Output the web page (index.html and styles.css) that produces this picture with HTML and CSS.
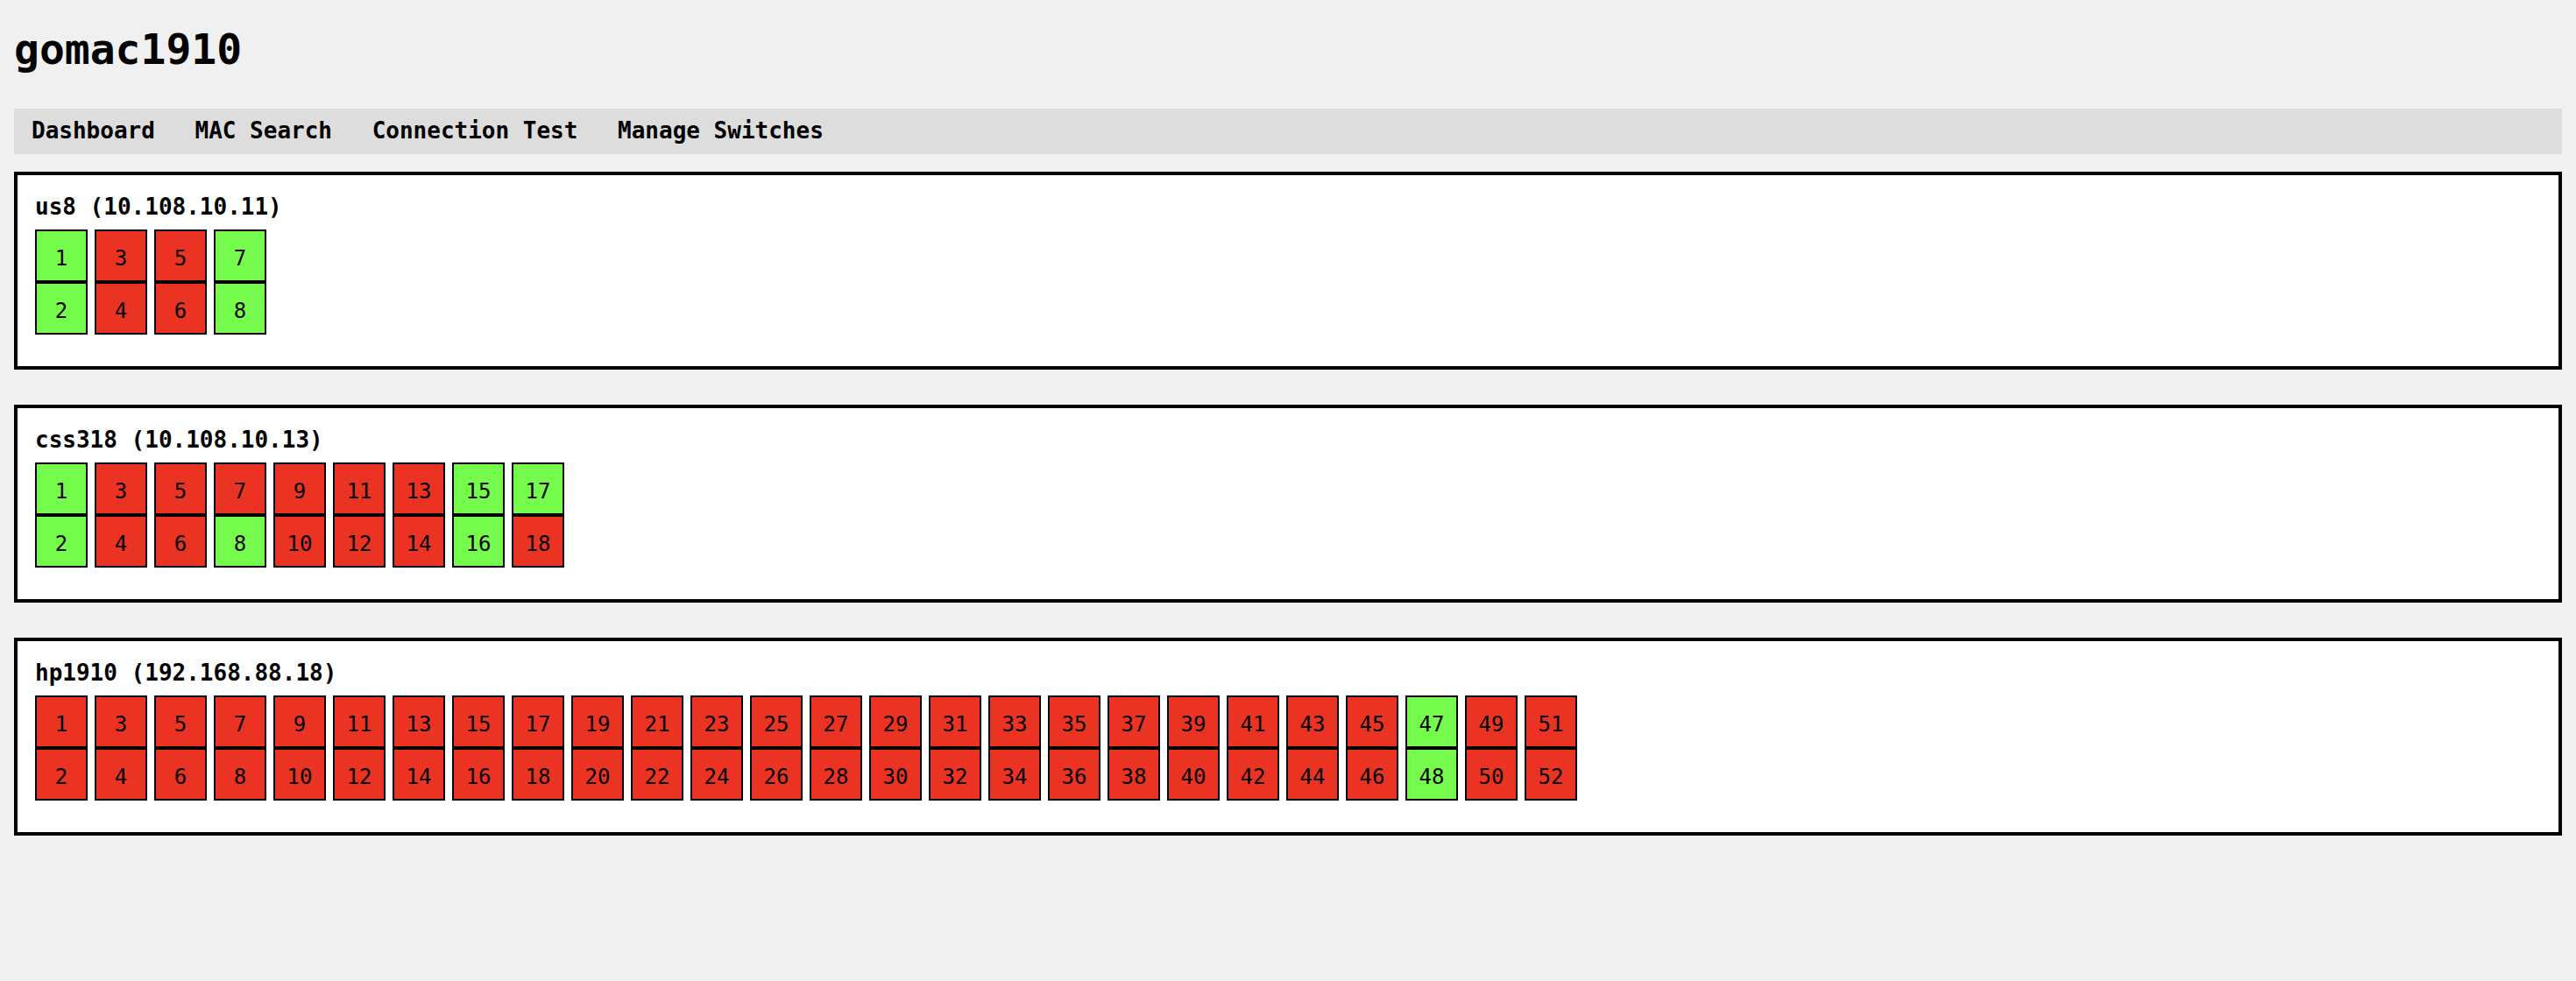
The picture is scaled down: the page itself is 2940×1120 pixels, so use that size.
FILE: index.html
```html
<!DOCTYPE html>
<html>
<head>
<meta charset="utf-8">
<title>gomac1910</title>
<link rel="stylesheet" href="styles.css">
</head>
<body>
<h1 class="title">gomac1910</h1>
<nav class="nav">
  <a href="#" class="nav-link">Dashboard</a>
  <a href="#" class="nav-link">MAC Search</a>
  <a href="#" class="nav-link">Connection Test</a>
  <a href="#" class="nav-link">Manage Switches</a>
</nav>

<section class="switch">
  <div class="switch-name">us8 (10.108.10.11)</div>
  <div class="ports">
    <div class="col"><div class="port up">1</div><div class="port up">2</div></div>
    <div class="col"><div class="port down">3</div><div class="port down">4</div></div>
    <div class="col"><div class="port down">5</div><div class="port down">6</div></div>
    <div class="col"><div class="port up">7</div><div class="port up">8</div></div>
  </div>
</section>

<section class="switch">
  <div class="switch-name">css318 (10.108.10.13)</div>
  <div class="ports">
    <div class="col"><div class="port up">1</div><div class="port up">2</div></div>
    <div class="col"><div class="port down">3</div><div class="port down">4</div></div>
    <div class="col"><div class="port down">5</div><div class="port down">6</div></div>
    <div class="col"><div class="port down">7</div><div class="port up">8</div></div>
    <div class="col"><div class="port down">9</div><div class="port down">10</div></div>
    <div class="col"><div class="port down">11</div><div class="port down">12</div></div>
    <div class="col"><div class="port down">13</div><div class="port down">14</div></div>
    <div class="col"><div class="port up">15</div><div class="port up">16</div></div>
    <div class="col"><div class="port up">17</div><div class="port down">18</div></div>
  </div>
</section>

<section class="switch">
  <div class="switch-name">hp1910 (192.168.88.18)</div>
  <div class="ports">
    <div class="col"><div class="port down">1</div><div class="port down">2</div></div>
    <div class="col"><div class="port down">3</div><div class="port down">4</div></div>
    <div class="col"><div class="port down">5</div><div class="port down">6</div></div>
    <div class="col"><div class="port down">7</div><div class="port down">8</div></div>
    <div class="col"><div class="port down">9</div><div class="port down">10</div></div>
    <div class="col"><div class="port down">11</div><div class="port down">12</div></div>
    <div class="col"><div class="port down">13</div><div class="port down">14</div></div>
    <div class="col"><div class="port down">15</div><div class="port down">16</div></div>
    <div class="col"><div class="port down">17</div><div class="port down">18</div></div>
    <div class="col"><div class="port down">19</div><div class="port down">20</div></div>
    <div class="col"><div class="port down">21</div><div class="port down">22</div></div>
    <div class="col"><div class="port down">23</div><div class="port down">24</div></div>
    <div class="col"><div class="port down">25</div><div class="port down">26</div></div>
    <div class="col"><div class="port down">27</div><div class="port down">28</div></div>
    <div class="col"><div class="port down">29</div><div class="port down">30</div></div>
    <div class="col"><div class="port down">31</div><div class="port down">32</div></div>
    <div class="col"><div class="port down">33</div><div class="port down">34</div></div>
    <div class="col"><div class="port down">35</div><div class="port down">36</div></div>
    <div class="col"><div class="port down">37</div><div class="port down">38</div></div>
    <div class="col"><div class="port down">39</div><div class="port down">40</div></div>
    <div class="col"><div class="port down">41</div><div class="port down">42</div></div>
    <div class="col"><div class="port down">43</div><div class="port down">44</div></div>
    <div class="col"><div class="port down">45</div><div class="port down">46</div></div>
    <div class="col"><div class="port up">47</div><div class="port up">48</div></div>
    <div class="col"><div class="port down">49</div><div class="port down">50</div></div>
    <div class="col"><div class="port down">51</div><div class="port down">52</div></div>
  </div>
</section>
</body>
</html>
```

FILE: styles.css
```css
html, body {
  margin: 0;
  padding: 0;
}

body {
  background: #f0f0f0;
  padding: 16px;
  font-family: "DejaVu Sans Mono", "Liberation Mono", monospace;
  color: #000;
}

.title {
  font-size: 48px;
  line-height: 56px;
  font-weight: bold;
  margin: 12px 0 40px 0;
}

.nav {
  display: flex;
  gap: 45.6px;
  background: #dddddd;
  padding: 10px 20px 12px 20px;
  margin-bottom: 20px;
}

.nav-link {
  font-size: 26px;
  line-height: 30px;
  font-weight: bold;
  color: #000;
  text-decoration: none;
}

.switch {
  background: #ffffff;
  border: 4px solid #000;
  padding: 21px 20px 36px 20px;
  margin-bottom: 40px;
}

.switch-name {
  font-size: 26px;
  line-height: 30px;
  font-weight: bold;
  margin-bottom: 11px;
}

.ports {
  display: flex;
  gap: 8px;
}

.col {
  display: flex;
  flex-direction: column;
}

.port {
  box-sizing: border-box;
  width: 60px;
  height: 60px;
  border: 2px solid #000;
  padding-top: 6px;
  font-size: 24px;
  line-height: 50px;
  text-align: center;
}

.up {
  background: #75fb4c;
}

.down {
  background: #ea3323;
}
```
